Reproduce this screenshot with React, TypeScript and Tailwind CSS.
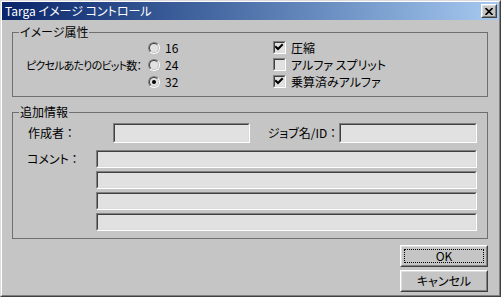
import React from "react";

function Sunken({ className }: { className: string }) {
  return (
    <div className={`${className} border border-t-[#808080] border-l-[#808080] border-r-white border-b-white`}>
      <div className="h-full w-full border border-t-[#404040] border-l-[#404040] border-r-[#dcdcdc] border-b-[#dcdcdc] bg-[#e1e1e1]" />
    </div>
  );
}

function Radio({ checked, label }: { checked?: boolean; label: string }) {
  return (
    <div className="flex h-[17px] items-center">
      <div className="flex h-[12px] w-[12px] rounded-full border border-t-[#808080] border-l-[#808080] border-r-white border-b-white">
        <div className="flex h-full w-full items-center justify-center rounded-full border border-t-[#404040] border-l-[#404040] border-r-[#c5c5c5] border-b-[#c5c5c5] bg-[#e1e1e1]">
          {checked && <div className="h-[4px] w-[4px] rounded-full bg-black" />}
        </div>
      </div>
      <span className="ml-[5px]">{label}</span>
    </div>
  );
}

function Check({ checked, label }: { checked?: boolean; label: string }) {
  return (
    <div className="flex h-[17px] items-center">
      <div className="h-[13px] w-[13px] border border-t-[#808080] border-l-[#808080] border-r-white border-b-white">
        <div className="flex h-full w-full items-center justify-center border border-t-[#404040] border-l-[#404040] border-r-[#dcdcdc] border-b-[#dcdcdc] bg-[#e1e1e1]">
          {checked && (
            <svg width="9" height="9" viewBox="0 0 9 9">
              <path d="M1 4 L3 6 L7 2" fill="none" stroke="#000" strokeWidth="2" strokeLinecap="square" />
            </svg>
          )}
        </div>
      </div>
      <span className="ml-[5px] whitespace-nowrap">{label}</span>
    </div>
  );
}

function Button({ label, focus }: { label: string; focus?: boolean }) {
  return (
    <div className="h-[22px] w-[88px] border border-t-white border-l-white border-r-[#404040] border-b-[#404040]">
      <div className="flex h-full w-full items-center justify-center border border-t-[#dcdcdc] border-l-[#dcdcdc] border-r-[#808080] border-b-[#808080] bg-[#c5c5c5] p-[2px]">
        <div className={`flex h-full w-full items-center justify-center ${focus ? "border border-dotted border-black" : ""}`}>
          {label}
        </div>
      </div>
    </div>
  );
}

export default function App() {
  return (
    <div className="h-[297px] w-[501px] border border-t-[#dcdcdc] border-l-[#dcdcdc] border-r-[#404040] border-b-[#404040] font-['Noto_Sans_CJK_JP',sans-serif] text-[12px] leading-[14px] text-black [font-feature-settings:'palt']">
      <div className="flex h-full w-full flex-col border border-t-white border-l-white border-r-[#808080] border-b-[#808080] bg-[#c5c5c5]">
        <div className="flex h-[18px] items-center justify-between bg-linear-to-r from-[#0a246a] to-[#a6caf0] pl-[3px] pr-[2px]">
          <span className="text-white">Targa イメージ コントロール</span>
          <div className="h-[14px] w-[16px] border border-t-white border-l-white border-r-[#404040] border-b-[#404040]">
            <div className="flex h-full w-full items-center justify-center border border-t-[#dcdcdc] border-l-[#dcdcdc] border-r-[#808080] border-b-[#808080] bg-[#c5c5c5]">
              <svg width="8" height="7" viewBox="0 0 8 7">
                <path d="M0.5 0 L7.5 7 M7.5 0 L0.5 7" stroke="#000" strokeWidth="1.6" />
              </svg>
            </div>
          </div>
        </div>

        <div className="flex flex-col px-[10px]">
          <fieldset className="mt-[5px] w-[476px] border border-[#6f6f6f] pb-[6px]">
            <legend className="ml-[6px] px-[1px] leading-[14px]">イメージ属性</legend>
            <div className="flex pl-[13px]">
              <div className="flex w-[122px] items-center whitespace-nowrap text-[11px] tracking-[-0.8px]">ピクセルあたりのビット数：</div>
              <div className="flex w-[125px] flex-col">
                <Radio label="16" />
                <Radio label="24" />
                <Radio checked label="32" />
              </div>
              <div className="flex flex-col">
                <Check checked label="圧縮" />
                <Check label="アルファ スプリット" />
                <Check checked label="乗算済みアルファ" />
              </div>
            </div>
          </fieldset>

          <fieldset className="mt-[8px] w-[476px] border border-[#6f6f6f] pb-[7px] pr-[10px]">
            <legend className="ml-[6px] px-[1px] leading-[14px]">追加情報</legend>
            <div className="mt-[4px] flex h-[20px] items-center pl-[15px]">
              <div className="w-[85px]">作成者 ：</div>
              <Sunken className="h-[20px] w-[137px]" />
              <div className="flex-1 pr-[3px] text-right">ジョブ名/ID ：</div>
              <Sunken className="h-[20px] w-[138px]" />
            </div>
            <div className="mt-[7px] flex pl-[14px]">
              <div className="w-[69px] pt-[2px]">コメント ：</div>
              <div className="flex flex-col gap-[3px]">
                <Sunken className="h-[18px] w-[381px]" />
                <Sunken className="h-[18px] w-[381px]" />
                <Sunken className="h-[18px] w-[381px]" />
                <Sunken className="h-[18px] w-[381px]" />
              </div>
            </div>
          </fieldset>

          <div className="mt-[6px] flex flex-col items-end gap-[3px] pr-[1px]">
            <Button label="OK" focus />
            <Button label="キャンセル" />
          </div>
        </div>
      </div>
    </div>
  );
}
